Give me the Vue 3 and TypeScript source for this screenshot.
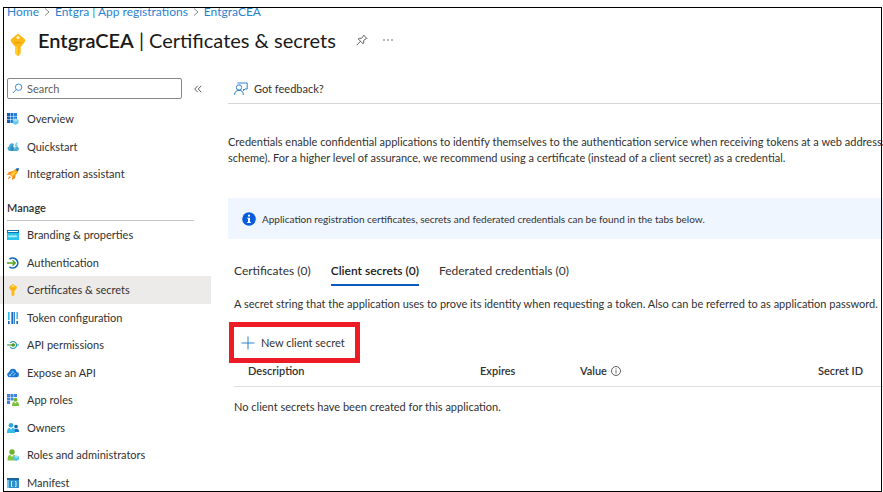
<script setup lang="ts">
import { ref } from 'vue'

interface NavItem {
  label: string
  icon: string
}

const mainItems: NavItem[] = [
  { label: 'Overview', icon: 'overview' },
  { label: 'Quickstart', icon: 'quickstart' },
  { label: 'Integration assistant', icon: 'rocket' },
]

const manageItems: NavItem[] = [
  { label: 'Branding & properties', icon: 'branding' },
  { label: 'Authentication', icon: 'auth' },
  { label: 'Certificates & secrets', icon: 'key' },
  { label: 'Token configuration', icon: 'token' },
  { label: 'API permissions', icon: 'permissions' },
  { label: 'Expose an API', icon: 'cloud' },
  { label: 'App roles', icon: 'roles' },
  { label: 'Owners', icon: 'owners' },
  { label: 'Roles and administrators', icon: 'admin' },
  { label: 'Manifest', icon: 'manifest' },
]

const groups = [
  { title: '', items: mainItems },
  { title: 'Manage', items: manageItems },
]

const tabs = ['Certificates (0)', 'Client secrets (0)', 'Federated credentials (0)']
const activeTab = ref('Client secrets (0)')
const activeItem = ref('Certificates & secrets')
const query = ref('')
</script>

<template>
  <div class="page">
    <nav class="crumbs" aria-label="Breadcrumb">
      <a href="#">Home</a>
      <svg class="chev" viewBox="0 0 6 8"><path d="M1 .5 5 4 1 7.500" /></svg>
      <a href="#">Entgra | App registrations</a>
      <svg class="chev" viewBox="0 0 6 8"><path d="M1 .5 5 4 1 7.500" /></svg>
      <a href="#">EntgraCEA</a>
    </nav>

    <header class="title-bar">
      <svg class="title-key" viewBox="0 0 16 24">
        <path fill="#fdb813" d="M8 .5 14.600 6q1.400 1.200.3 2.800L12 12.500q-.7.8-1.300 1V20L8 23.500 5.300 20.500V13.500Q4.500 13.200 4 12.500L1.100 8.800Q0 7.200 1.400 6Z" />
        <path fill="#ffcf2e" d="M5.300 13.500h2.500V23L5.300 20.500Z" />
        <path fill="#e8960a" d="M4.500 9.200h7v1h-7z" />
        <circle cx="8" cy="4.500" r="1.600" fill="#fff3cf" />
      </svg>
      <h1><strong>EntgraCEA</strong> | Certificates &amp; secrets</h1>
      <button class="icon-button pin" type="button" aria-label="Pin">
        <svg viewBox="0 0 12 12"><path d="M7.300.9 11.100 4.700M7.800 1.400 5.500 4.400Q3.700 3.800 2.200 4.900L7.100 9.800Q8.200 8.300 7.600 6.500L10.600 4.200M4.500 7.300.7 11.200" /></svg>
      </button>
      <button class="icon-button more" type="button" aria-label="More">
        <svg viewBox="0 0 12 4"><circle cx="2" cy="2" r=".8" /><circle cx="6" cy="2" r=".8" /><circle cx="10" cy="2" r=".8" /></svg>
      </button>
    </header>

    <div class="body">
      <aside class="sidebar">
        <div class="search-row">
          <label class="search">
            <svg viewBox="0 0 12 12"><circle cx="7.200" cy="4.600" r="3.500" /><path d="M4.600 7.200.8 11" /></svg>
            <input v-model="query" type="text" placeholder="Search" aria-label="Search" />
          </label>
          <button class="icon-button collapse" type="button" aria-label="Collapse menu">
            <svg viewBox="0 0 8 8"><path d="M3.700.8.8 4l2.900 3.200M7.200.8 4.300 4l2.900 3.200" /></svg>
          </button>
        </div>

        <nav v-for="group in groups" :key="group.title" class="group">
          <h2 v-if="group.title">{{ group.title }}</h2>
          <ul>
            <li v-for="item in group.items" :key="item.label">
              <a href="#" :class="{ selected: item.label === activeItem }" @click.prevent="activeItem = item.label">
                <svg class="nav-icon" viewBox="0 0 12 12" aria-hidden="true">
                  <template v-if="item.icon === 'overview'">
                    <path fill="#0f5fb8" d="M0 0h3v3H0zM0 3.500h3v3H0zM0 7h3v3H0z" />
                    <path fill="#1c74ce" d="M3.500 0h3v3h-3zM3.500 3.500h3v3h-3zM3.500 7h3v3h-3z" />
                    <path fill="#2583dc" d="M7 0h3v3H7zM7 3.500h3v3H7z" />
                    <path fill="#6cc9ee" d="M8.500 5.500 11.500 7v3.300L8.500 12 5.700 10.300V7z" />
                    <path fill="#a5e1f7" d="M8.500 5.500 11.500 7l-3 1.600L5.700 7z" />
                  </template>
                  <template v-else-if="item.icon === 'quickstart'">
                    <path fill="#4badd6" d="M2.700 10A2.500 2.500 0 0 1 2 5.200Q2.500 2.300 5 2.200 6.200 2.200 7 3L6.200 6h1.600L7.200 8.500 10 4.500H8.500L9 3Q10.800 5 10.600 6 12 6.300 12 8T10 10Z" />
                    <path fill="#2f8dbd" d="M4 10q-1.500-2 .2-4.300Q5 4 6.300 4L5.700 7h1.500L6 10Z" />
                    <path fill="#7fd0ea" d="M9 1.500h1.800L10 4h1L8 8l.6-2.700H7.400Z" />
                  </template>
                  <template v-else-if="item.icon === 'rocket'">
                    <path fill="#f9a11b" d="M11.200.8Q7.500.8 5 3.500L2 4 0 7l2.700-.5L5.500 9.300 5 12l3-2 .5-3Q11.500 4.500 11.200.8Z" />
                    <path fill="#f58a1f" d="M5 3.500 2 4 0 7l2.700-.5ZM8.500 7 8 10l-3 2 .5-2.700ZM2.500 8 .5 11.500 4 9.500Z" />
                    <path fill="#ffd23e" d="M7.500 3 9 4.500 5.500 8 4 6.500Z" />
                    <path fill="#0b63b5" d="M11.800 0Q9.700 0 8.500 1.200L10.800 3.500Q12 2.200 11.800 0Z" />
                  </template>
                  <template v-else-if="item.icon === 'branding'">
                    <path fill="#28c4ee" d="M0 1h12v10H0z" />
                    <path fill="#0a79b8" d="M0 1h12v3H0z" />
                    <path fill="#fff" d="M1 2h10v1H1z" />
                    <path fill="none" stroke="#d8f7ff" stroke-width=".8" d="m1.500 6.500.7 1.700.7-1.700.7 1.700.7-1.700.7 1.700.7-1.700.7 1.700.7-1.700.7 1.700.7-1.700.7 1.700.7-1.700" />
                  </template>
                  <template v-else-if="item.icon === 'auth'">
                    <path fill="none" stroke="#1467bd" stroke-width="1.700" d="M2.500 2.200A5 5 0 1 1 2.500 9.800" />
                    <path fill="none" stroke="#57a317" stroke-width="1.400" d="M0 6h8M5.500 3.300 8.200 6 5.500 8.700" />
                  </template>
                  <template v-else-if="item.icon === 'key'">
                    <path fill="#fdbb17" d="M6 0 9.500 2.500Q10.500 3.500 9.500 4.800L7.500 7v4L6 12.200 4.500 11V7L2.500 4.800Q1.500 3.500 2.500 2.500Z" />
                    <path fill="#fff4d1" d="M5.200 1.400h1.600v1.400H5.200z" />
                    <path fill="#e99a0b" d="M4 4.600h4v.7H4z" />
                  </template>
                  <template v-else-if="item.icon === 'token'">
                    <path fill="#32bdea" d="M1 0h1.600v6H1zM9.400 0H11v7H9.400z" />
                    <path fill="#1769c1" d="M1 9h1.600v3H1zM4.400 0H6v12H4.400zM6.600 0h1.200v12H6.600zM9.400 9H11v3H9.400z" />
                    <path fill="#32bdea" d="M1 6h1.600v2H1z" />
                  </template>
                  <template v-else-if="item.icon === 'permissions'">
                    <path fill="none" stroke="#2799ba" stroke-width="1.200" d="M0 6h2M10 6h2M3.200 4A3.500 3.500 0 1 1 3.200 8" />
                    <path fill="none" stroke="#62a82b" stroke-width="1.300" d="M1.500 6h5" />
                    <circle cx="6.300" cy="6" r="1.700" fill="#4a9a1b" />
                  </template>
                  <template v-else-if="item.icon === 'cloud'">
                    <path fill="#1b76d4" d="M2.800 10.300A2.700 2.700 0 0 1 2.200 5Q2.800 1.800 6 1.700 8.800 1.800 9.700 4.900 12 5.200 12 7.700 11.800 10.300 9.500 10.300Z" />
                    <path fill="none" stroke="#a9dcff" stroke-width=".9" d="M3 8.500 5.500 5.500M6 8.800 8.500 6" />
                    <circle cx="5.700" cy="5" r="1.200" fill="#5db7f5" /><circle cx="3" cy="8.300" r="1" fill="#83ccfb" />
                  </template>
                  <template v-else-if="item.icon === 'roles'">
                    <path fill="#3e83dc" d="M0 0h3v3H0zM3.500 0h3v3h-3zM7 0h3v3H7zM0 3.500h3v3H0zM3.500 3.500h3v3h-3zM0 7h3v3H0z" />
                    <circle cx="8.500" cy="5.700" r="2" fill="#6fb52c" />
                    <path fill="#7cc13a" d="M5 12q0-4 2-4.200L8.500 9.500 10 7.800Q12 8 12 12Z" />
                  </template>
                  <template v-else-if="item.icon === 'owners'">
                    <circle cx="9" cy="4.500" r="1.800" fill="#0c62b5" />
                    <path fill="#1673c7" d="M6.500 10q0-3.400 1.700-3.600L9 7.300l.8-.9Q12 6.600 12 10Z" />
                    <circle cx="4" cy="3.300" r="2.300" fill="#29a9d9" />
                    <path fill="#36bce8" d="M0 11q0-5 2.500-5.200L4 7.600l1.500-1.800Q8 6 8 11Z" />
                  </template>
                  <template v-else-if="item.icon === 'admin'">
                    <circle cx="5" cy="3" r="2.700" fill="#6fb12c" />
                    <path fill="#83c440" d="M.5 11.500Q.5 6 3 5.800L5 8l2-2.200q2.500.2 2.500 5.700Z" />
                    <path fill="#4fc6ec" d="M9.300 6.500 12 7.800v2.600L9.300 12 6.800 10.400V7.800Z" />
                    <path fill="#9be2f7" d="M9.300 6.500 12 7.800 9.300 9.200 6.800 7.800Z" />
                  </template>
                  <template v-else>
                    <path fill="#2c8fc9" d="M0 1h12v10H0z" />
                    <path fill="#17669e" d="M0 1h12v2H0z" />
                    <path fill="#75c5e9" d="M0 3h2v8H0z" />
                    <path fill="none" stroke="#e4f6ff" stroke-width=".9" d="M5.500 4.500h-1v5h1M8 4.500h1v5H8" />
                  </template>
                </svg>
                <span>{{ item.label }}</span>
              </a>
            </li>
          </ul>
        </nav>
      </aside>

      <main>
        <div class="toolbar">
          <button class="command" type="button">
            <svg class="feedback" viewBox="0 0 14 14"><path d="M3.500 1h9.700v6H11L9.500 8.600V7" /><circle cx="5" cy="5.500" r="2.700" /><path d="M.6 13Q.8 8.300 5 8.300T9.400 13" /></svg>
            <span>Got feedback?</span>
          </button>
        </div>

        <p class="intro">
          Credentials enable confidential applications to identify themselves to the authentication service when receiving tokens at a web addressable<br />
          scheme). For a higher level of assurance, we recommend using a certificate (instead of a client secret) as a credential.
        </p>

        <div class="banner" role="note">
          <svg viewBox="0 0 14 14"><circle cx="7" cy="7" r="6.800" fill="#0a5cdb" /><path fill="#fff" d="M6 2.700h2v1.800H6zM5.300 5.700H8V10h.8v1H5.200v-1H6V6.700h-.7z" /></svg>
          <span>Application registration certificates, secrets and federated credentials can be found in the tabs below.</span>
        </div>

        <section class="panel">
          <div class="tabs" role="tablist">
            <button
              v-for="tab in tabs"
              :key="tab"
              type="button"
              role="tab"
              :aria-selected="tab === activeTab"
              :class="{ active: tab === activeTab }"
              @click="activeTab = tab"
            >{{ tab }}</button>
          </div>

          <p class="hint">A secret string that the application uses to prove its identity when requesting a token. Also can be referred to as application password.</p>

          <button class="command new-secret" type="button">
            <svg viewBox="0 0 14 14"><path d="M7 .5v13M.5 7h13" /></svg>
            <span>New client secret</span>
          </button>

          <table>
            <thead>
              <tr>
                <th class="description">Description</th>
                <th class="expires">Expires</th>
                <th class="value">
                  <span>Value <svg viewBox="0 0 10 10"><circle cx="5" cy="5" r="4.500" /><path d="M5 4.300v3.200M5 2.500v.9" /></svg></span>
                </th>
                <th>Secret ID</th>
              </tr>
            </thead>
            <tbody>
              <tr><td colspan="4">No client secrets have been created for this application.</td></tr>
            </tbody>
          </table>
        </section>
      </main>
    </div>
  </div>
</template>

<style>
body {
  margin: 0;
  background: #fff;
}
</style>

<style scoped>
.page {
  position: relative;
  box-sizing: border-box;
  height: 100vh;
  overflow: hidden;
  font: 11px/16px Lato, "Open Sans", sans-serif;
  color: #323130;
}
.page::before {
  content: "";
  position: absolute;
  z-index: 1;
  inset: 0 0 auto;
  height: 7px;
  background: #fff;
}
.page::after {
  content: "";
  position: absolute;
  z-index: 2;
  inset: 7px 1px 0 3px;
  border: 1px solid #000;
  pointer-events: none;
}
svg {
  display: block;
  flex: none;
}
button {
  padding: 0;
  border: 0;
  background: none;
  font: inherit;
  color: inherit;
}
a {
  color: inherit;
  text-decoration: none;
}
.crumbs {
  display: flex;
  align-items: center;
  gap: 5px;
  padding: 4px 7px 0;
  font-size: 12px;
  color: #2a83d0;
}
.chev {
  width: 6px;
  height: 8px;
  fill: none;
  stroke: #8a8886;
}
.title-bar {
  display: flex;
  align-items: center;
  height: 40px;
  padding-left: 10px;
}
.title-key {
  width: 16px;
  height: 24px;
  margin: 10px 12px 0 0;
}
h1 {
  margin: 0;
  font-size: 20px;
  line-height: 24px;
  font-weight: 400;
  color: #1b1a19;
}
h1 strong {
  font-weight: 600;
}
.icon-button svg {
  fill: none;
  stroke: #605e5c;
}
.pin {
  margin-left: 20px;
}
.pin svg {
  width: 12px;
  height: 12px;
}
.more {
  margin-left: 14px;
}
.more svg {
  width: 12px;
  height: 4px;
  fill: #605e5c;
  stroke: none;
}
.body {
  display: flex;
  padding-top: 18px;
}
.sidebar {
  flex: none;
  width: 211px;
}
.search-row {
  display: flex;
  align-items: center;
  gap: 12px;
  padding-left: 7px;
}
.search {
  display: flex;
  align-items: center;
  gap: 4px;
  box-sizing: border-box;
  width: 175px;
  height: 21px;
  padding-left: 4px;
  border: 1px solid #8a8886;
  border-radius: 2px;
}
.search svg {
  width: 11px;
  height: 11px;
  fill: none;
  stroke: #2a83d0;
}
.search input {
  min-width: 0;
  flex: 1;
  padding: 0;
  border: 0;
  outline: 0;
  background: none;
  font: inherit;
  color: inherit;
}
.search input::placeholder {
  color: #605e5c;
  opacity: 1;
}
.collapse svg {
  width: 8px;
  height: 8px;
}
.group ul {
  margin: 0;
  padding: 6px 0 0;
  list-style: none;
}
.group a {
  display: flex;
  align-items: center;
  gap: 8px;
  height: 28px;
  padding-left: 7px;
}
.group li:nth-child(even) a {
  height: 27px;
}
.group a.selected {
  background: #edebe9;
}
.nav-icon {
  width: 12px;
  height: 12px;
}
h2 {
  margin: 12px 17px 0 7px;
  padding-bottom: 4px;
  border-bottom: 1px solid #c8c6c4;
  font-size: 11px;
  line-height: 16px;
  font-weight: 600;
}
.group h2 + ul {
  padding-top: 0;
}
main {
  flex: 1;
  min-width: 0;
  padding-left: 17px;
}
.toolbar {
  padding: 3px 0 6px 6px;
  border-bottom: 1px solid #d6d4d2;
}
.command {
  display: flex;
  align-items: center;
  gap: 6px;
}
.command svg {
  width: 14px;
  height: 14px;
  fill: none;
  stroke: #2a83d0;
}
.intro {
  margin: 30px 0 32px;
  white-space: nowrap;
}
.banner {
  display: flex;
  align-items: center;
  gap: 6px;
  height: 41px;
  padding-left: 14px;
  background: #f0f6ff;
  font-size: 10px;
}
.banner svg {
  width: 14px;
  height: 14px;
}
.panel {
  padding-left: 6px;
}
.tabs {
  display: flex;
  gap: 20px;
  padding-top: 24px;
  font-size: 12px;
}
.tabs button {
  padding-bottom: 5px;
  border-bottom: 2px solid transparent;
}
.tabs .active {
  border-color: #0a5cbf;
  font-weight: 600;
  color: #1b1a19;
}
.hint {
  margin: 10px 0 0;
  white-space: nowrap;
}
.new-secret {
  height: 41px;
  margin: 10px 0 0 -5px;
  padding: 0 10px 0 7px;
  border: 5px solid #ed1c24;
}
table {
  width: 100%;
  border-collapse: collapse;
  table-layout: fixed;
}
th {
  height: 16px;
  padding: 0 0 7px;
  border-bottom: 1px solid #e1dfdd;
  text-align: left;
  font-weight: 600;
}
th span {
  display: flex;
  align-items: center;
  gap: 4px;
}
th svg {
  width: 10px;
  height: 10px;
  fill: none;
  stroke: #605e5c;
}
.description {
  width: 232px;
  padding-left: 14px;
}
.expires {
  width: 100px;
}
.value {
  width: 238px;
}
td {
  padding: 12px 0;
}
</style>
